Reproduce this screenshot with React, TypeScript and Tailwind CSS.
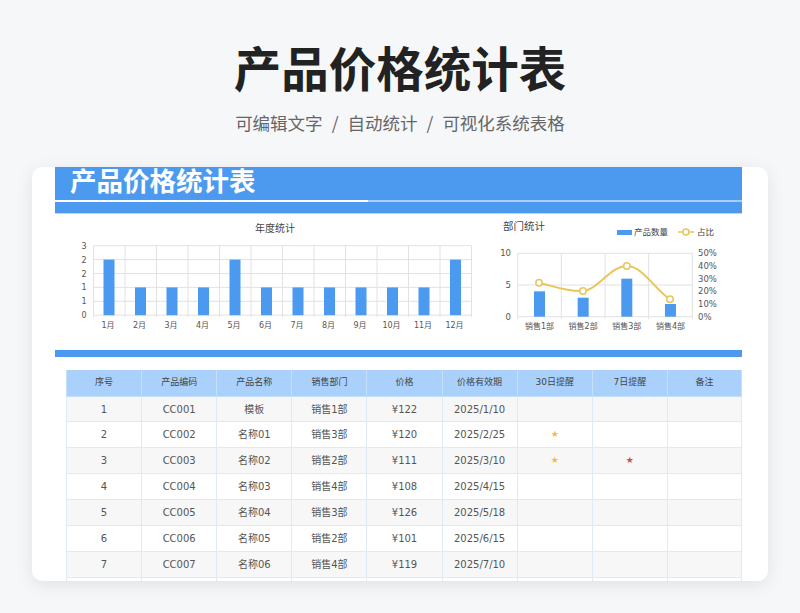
import * as React from 'react';

const FONT = '"DejaVu Sans", "Noto Sans CJK SC", sans-serif';

const COLUMNS = ['序号', '产品编码', '产品名称', '销售部门', '价格', '价格有效期', '30日提醒', '7日提醒', '备注'];

type Row = [string, string, string, string, string, string, boolean, boolean];

const ROWS: Row[] = [
  ['1', 'CC001', '模板', '销售1部', '¥122', '2025/1/10', false, false],
  ['2', 'CC002', '名称01', '销售3部', '¥120', '2025/2/25', true, false],
  ['3', 'CC003', '名称02', '销售2部', '¥111', '2025/3/10', true, true],
  ['4', 'CC004', '名称03', '销售4部', '¥108', '2025/4/15', false, false],
  ['5', 'CC005', '名称04', '销售3部', '¥126', '2025/5/18', false, false],
  ['6', 'CC006', '名称05', '销售2部', '¥101', '2025/6/15', false, false],
  ['7', 'CC007', '名称06', '销售4部', '¥119', '2025/7/10', false, false],
];

const MONTHS = [2, 1, 1, 1, 2, 1, 1, 1, 1, 1, 1, 2];
const DEPTS = [4, 3, 6, 2];

function YearChart() {
  const left = 93.5;
  const step = 31.5;
  const top = 245.7;
  const rowH = 13.9;
  const labels = ['3', '2', '2', '1', '1', '0'];
  return (
    <svg viewBox="55 214 435 136" className="w-[435px] h-[136px] shrink-0">
      <text x="275" y="232" fontSize="10" fill="#444" textAnchor="middle" fontFamily={FONT}>年度统计</text>
      {labels.map((l, i) => (
        <g key={i}>
          <line x1={left} x2={left + step * 12} y1={top + i * rowH} y2={top + i * rowH} stroke="#e2e2e2" strokeWidth="1" />
          <text x="84" y={top + i * rowH + 3} fontSize="8" fill="#555" textAnchor="middle" fontFamily={FONT}>{l}</text>
        </g>
      ))}
      {Array.from({ length: 13 }).map((_, i) => (
        <line key={i} x1={left + i * step} x2={left + i * step} y1={top} y2={top + 5 * rowH + 2} stroke="#e2e2e2" strokeWidth="1" />
      ))}
      {MONTHS.map((v, i) => (
        <g key={i}>
          <rect x={left + i * step + 10} y={top + 5 * rowH - v * 2 * rowH} width="11" height={v * 2 * rowH} fill="#4c9aef" />
          <text x={left + i * step + 14.5} y="328" fontSize="8" fill="#555" textAnchor="middle" fontFamily={FONT}>{i + 1}月</text>
        </g>
      ))}
    </svg>
  );
}

function DeptChart() {
  const left = 517.7;
  const step = 43.65;
  const ys = ['50%', '40%', '30%', '20%', '10%', '0%'];
  return (
    <svg viewBox="490 214 252 136" className="w-[252px] h-[136px] shrink-0">
      <text x="503" y="230" fontSize="10.5" fill="#444" fontFamily={FONT}>部门统计</text>
      <rect x="617" y="230" width="15" height="5" fill="#4c9aef" />
      <text x="634" y="235" fontSize="8.5" fill="#444" fontFamily={FONT}>产品数量</text>
      <line x1="678" x2="694" y1="232" y2="232" stroke="#e9c55a" strokeWidth="1.5" />
      <circle cx="686" cy="232" r="3" fill="#fff" stroke="#e9c55a" strokeWidth="1.5" />
      <text x="697" y="235" fontSize="8.5" fill="#444" fontFamily={FONT}>占比</text>

      {[253.3, 285, 316.7].map((y, i) => (
        <g key={y}>
          <line x1={left} x2={left + 4 * step} y1={y} y2={y} stroke="#e2e2e2" strokeWidth="1" />
          <text x="511" y={y + 3} fontSize="8.5" fill="#555" textAnchor="end" fontFamily={FONT}>{['10', '5', '0'][i]}</text>
        </g>
      ))}
      {[0, 1, 2, 3, 4].map(i => (
        <line key={i} x1={left + i * step} x2={left + i * step} y1="253.3" y2="319" stroke="#e2e2e2" strokeWidth="1" />
      ))}
      {ys.map((l, i) => (
        <text key={l} x="698" y={253.3 + i * 12.68 + 3} fontSize="8.5" fill="#555" fontFamily={FONT}>{l}</text>
      ))}
      {DEPTS.map((v, i) => (
        <g key={i}>
          <rect x={left + i * step + 16.3} y={316.7 - v * 6.34} width="11" height={v * 6.34} fill="#4c9aef" />
          <text x={left + i * step + 21.8} y="329" fontSize="8" fill="#555" textAnchor="middle" fontFamily={FONT}>销售{i + 1}部</text>
        </g>
      ))}
      <path d="M539 282.7 C553 286 568 292 583 291 C598 290 610 266 626.8 266 C643 266 655 290 670 299.3" fill="none" stroke="#e9c55a" strokeWidth="2" />
      {[[539, 282.7], [583, 291], [626.8, 266], [670, 299.3]].map(([x, y]) => (
        <circle key={x} cx={x} cy={y} r="3.2" fill="#fff" stroke="#e9c55a" strokeWidth="1.5" />
      ))}
    </svg>
  );
}

function Cell({ children, last }: { children?: React.ReactNode; last?: boolean }) {
  return (
    <div className={`flex items-center justify-center border-b border-l border-[#dcebf5] ${last ? 'border-r' : ''}`}>
      {children}
    </div>
  );
}

function App() {
  return (
    <div
      className="w-[800px] h-[613px] overflow-hidden bg-[#f6f7f9] flex flex-col items-center"
      style={{ fontFamily: '"Noto Sans CJK SC", sans-serif' }}
    >
      <h1 className="pt-[38px] text-[47.5px] leading-[58px] font-bold text-[#222]">产品价格统计表</h1>
      <div className="mt-[15px] h-[24px] flex items-center gap-[9px] text-[17.5px] leading-[24px] text-[#666]">
        <span>可编辑文字</span>
        <span>/</span>
        <span>自动统计</span>
        <span>/</span>
        <span>可视化系统表格</span>
      </div>

      <div className="mt-[32px] w-[736px] h-[414px] shrink-0 rounded-[10px] bg-white pl-[23px] shadow-[0_4px_18px_rgba(0,0,0,0.09)]">
        <div className="w-[687px] h-[47px] bg-[#4c9aef] border-b border-[#b5d7fa]">
          <div className="h-[33px] pl-[15px] text-[26.5px] leading-[26px] font-bold text-white">产品价格统计表</div>
          <div className="h-[2px] bg-[#a8cff8]">
            <div className="w-[313px] h-[2px] bg-white" />
          </div>
        </div>

        <div className="flex h-[136px]">
          <YearChart />
          <DeptChart />
        </div>

        <div className="w-[687px] h-[7px] bg-[#4c9aef]" />

        {/* the sheet carries on below the card, so only this part gets cut */}
        <div className="mt-[13px] ml-[11px] w-[676px] h-[211px] overflow-hidden" style={{ fontFamily: FONT }}>
          <div className="grid grid-cols-9 h-[27px] bg-[#a9d1fb] text-[9px] text-[#444]">
            {COLUMNS.map((c, i) => (
              <div key={c} className={`flex items-center justify-center border-l border-b border-[#c5e0fb] ${i === 8 ? 'border-r' : ''}`}>
                {c}
              </div>
            ))}
          </div>
          {ROWS.map((r, i) => (
            <div
              key={r[0]}
              className={`grid grid-cols-9 text-[10px] text-[#555] ${i === 0 ? 'h-[25px]' : 'h-[26px]'} ${i % 2 === 0 ? 'bg-[#f7f7f8]' : 'bg-white'}`}
            >
              <Cell>{r[0]}</Cell>
              <Cell>{r[1]}</Cell>
              <Cell>{r[2]}</Cell>
              <Cell>{r[3]}</Cell>
              <Cell>{r[4]}</Cell>
              <Cell>{r[5]}</Cell>
              <Cell>{r[6] && <span className="text-[9px] text-[#f2c037]">★</span>}</Cell>
              <Cell>{r[7] && <span className="text-[9px] text-[#e0454f]">★</span>}</Cell>
              <Cell last />
            </div>
          ))}
          <div className="grid grid-cols-9 h-[26px]">
            {COLUMNS.map((c, i) => (
              <Cell key={c} last={i === 8} />
            ))}
          </div>
        </div>
      </div>
    </div>
  );
}

export default App;
